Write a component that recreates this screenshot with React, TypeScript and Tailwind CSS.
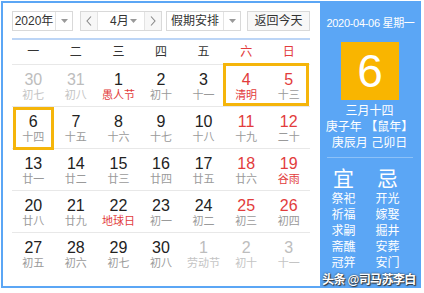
import React from "react";

type Cell = { n: number; l: string; nc?: "red" | "gray" | "dark"; lc?: "red" | "gray" | "light" };

const rows: Cell[][] = [
  [
    { n: 30, l: "初七", nc: "gray", lc: "light" },
    { n: 31, l: "初八", nc: "gray", lc: "light" },
    { n: 1, l: "愚人节", lc: "red" },
    { n: 2, l: "初十" },
    { n: 3, l: "十一" },
    { n: 4, l: "清明", nc: "red", lc: "red" },
    { n: 5, l: "十三", nc: "red" },
  ],
  [
    { n: 6, l: "十四" },
    { n: 7, l: "十五" },
    { n: 8, l: "十六" },
    { n: 9, l: "十七" },
    { n: 10, l: "十八" },
    { n: 11, l: "十九", nc: "red" },
    { n: 12, l: "二十", nc: "red" },
  ],
  [
    { n: 13, l: "廿一" },
    { n: 14, l: "廿二" },
    { n: 15, l: "廿三" },
    { n: 16, l: "廿四" },
    { n: 17, l: "廿五" },
    { n: 18, l: "廿六", nc: "red" },
    { n: 19, l: "谷雨", nc: "red", lc: "red" },
  ],
  [
    { n: 20, l: "廿八" },
    { n: 21, l: "廿九" },
    { n: 22, l: "地球日", lc: "red" },
    { n: 23, l: "初一" },
    { n: 24, l: "初二" },
    { n: 25, l: "初三", nc: "red" },
    { n: 26, l: "初四", nc: "red" },
  ],
  [
    { n: 27, l: "初五" },
    { n: 28, l: "初六" },
    { n: 29, l: "初七" },
    { n: 30, l: "初八" },
    { n: 1, l: "劳动节", nc: "gray", lc: "light" },
    { n: 2, l: "初十", nc: "gray", lc: "light" },
    { n: 3, l: "十一", nc: "gray", lc: "light" },
  ],
];

const numColor = (c?: string) =>
  c === "red" ? "text-[#e23c3c]" : c === "gray" ? "text-[#bdbdbd]" : "text-[#222222]";
const lunColor = (c?: string) =>
  c === "red" ? "text-[#e23c3c]" : c === "light" ? "text-[#c4c4c4]" : "text-[#9a9a9a]";

const Arrow = () => (
  <svg width="7" height="4" viewBox="0 0 7 4">
    <path d="M0 0 L7 0 L3.5 4 Z" fill="#999" />
  </svg>
);

const Chev = ({ dir }: { dir: "l" | "r" }) => (
  <svg width="6" height="10" viewBox="0 0 6 10">
    <path d={dir === "l" ? "M5 0.5 L1 5 L5 9.5" : "M1 0.5 L5 5 L1 9.5"} stroke="#888" strokeWidth="1.1" fill="none" />
  </svg>
);

export default function App() {
  const font = { fontFamily: '"Liberation Sans", "Noto Sans CJK SC", sans-serif' };
  return (
    <div className="w-[424px] h-[293px] bg-white relative overflow-hidden" style={font}>
      <div className="ml-[1px] mt-[1px] w-[420px] h-[287px] border-2 border-[#5ba6f5] flex">
        {/* left */}
        <div className="w-[317px] pl-[9px] pt-[8px]">
          <div className="flex h-[20px] text-[12px] text-[#333] leading-none">
            <div className="flex w-[61px] border border-[#d9d9d9] bg-white">
              <div className="flex-1 flex items-center justify-center">2020年</div>
              <div className="w-[17px] border-l border-[#e3e3e3] flex items-center justify-center"><Arrow /></div>
            </div>
            <div className="flex w-[82px] ml-[7px] border border-[#d9d9d9] bg-white">
              <div className="w-[17px] border-r border-[#e3e3e3] bg-[#f7f7f7] flex items-center justify-center"><Chev dir="l" /></div>
              <div className="flex-1 flex items-center justify-between pl-[12px] pr-[7px]">
                <span>4月</span>
                <Arrow />
              </div>
              <div className="w-[17px] border-l border-[#e3e3e3] bg-[#f7f7f7] flex items-center justify-center"><Chev dir="r" /></div>
            </div>
            <div className="flex w-[75px] ml-[4px] border border-[#d9d9d9] bg-white">
              <div className="flex-1 flex items-center justify-center">假期安排</div>
              <div className="w-[17px] border-l border-[#e3e3e3] flex items-center justify-center"><Arrow /></div>
            </div>
            <div className="w-[63px] ml-[6px] border border-[#d9d9d9] bg-[#f8f8f8] flex items-center justify-center">返回今天</div>
          </div>
          <div className="mt-[7px] h-[2px] w-[298px] bg-[#bcd5f6]" />
          <div className="w-[298px] grid grid-cols-7 h-[25px] items-center text-[12px] text-[#333] border-b border-[#e8e8e8]">
            {["一", "二", "三", "四", "五", "六", "日"].map((d, i) => (
              <div key={d} className={`text-center ${i >= 5 ? "text-[#e23c3c]" : ""}`}>{d}</div>
            ))}
          </div>
          {rows.map((row, ri) => (
            <div
              key={ri}
              className={`relative w-[298px] grid grid-cols-7 h-[42px] ${ri < rows.length - 1 ? "border-b border-[#e8e8e8]" : ""}`}
            >
              {row.map((c, ci) => (
                <div key={ci} className="flex flex-col items-center pt-[6px]">
                  <div className={`text-[16px] leading-[18px] ${numColor(c.nc)}`}>{c.n}</div>
                  <div className={`text-[11px] leading-[13px] ${lunColor(c.lc)}`}>{c.l}</div>
                </div>
              ))}
              {ri === 0 && (
                <div className="absolute left-[211px] top-[-2px] w-[86px] h-[43px] border-[3px] border-[#f5b50a]" />
              )}
              {ri === 1 && (
                <div className="absolute left-[1px] top-[0px] w-[41px] h-[43px] border-[3px] border-[#f5b50a]" />
              )}
            </div>
          ))}
        </div>
        {/* right */}
        <div className="flex-1 bg-[#5ba6f5] text-white flex flex-col items-center">
          <div className="mt-[12px] text-[11px] leading-[16px] ml-[2px] whitespace-nowrap tracking-[-0.3px]">2020-04-06 星期一</div>
          <div className="mt-[11px] w-[58px] h-[58px] bg-[#f9b500] flex items-center justify-center text-[46px] leading-none ml-[1px]">6</div>
          <div className="mt-[3px] text-[12px] leading-[16px] flex flex-col items-center">
            <div>三月十四</div>
            <div className="whitespace-nowrap">庚子年 【鼠年】</div>
            <div className="whitespace-nowrap">庚辰月 己卯日</div>
          </div>
          <div className="mt-[6px] h-[1px] w-[86px] bg-[#8cc1f8]" />
          <div className="mt-[9px] flex gap-[4px] ml-[-8px]">
            {[
              ["宜", "祭祀", "祈福", "求嗣", "斋醮", "冠笄"],
              ["忌", "开光", "嫁娶", "掘井", "安葬", "安门"],
            ].map((col, i) => (
              <div key={i} className="w-[40px] flex flex-col items-center">
                <div className="text-[21px] leading-[24px]">{col[0]}</div>
                {col.slice(1).map((t) => (
                  <div key={t} className="text-[12px] leading-[16px]">{t}</div>
                ))}
              </div>
            ))}
          </div>
        </div>
      </div>
      <div
        className="absolute left-[322px] top-[272px] text-[12px] leading-[17px] font-bold text-white whitespace-nowrap tracking-[-0.6px]"
        style={{ textShadow: "0 0 2px #333, 1px 1px 1px #333" }}
      >
        头条 @司马苏李白
      </div>
    </div>
  );
}
